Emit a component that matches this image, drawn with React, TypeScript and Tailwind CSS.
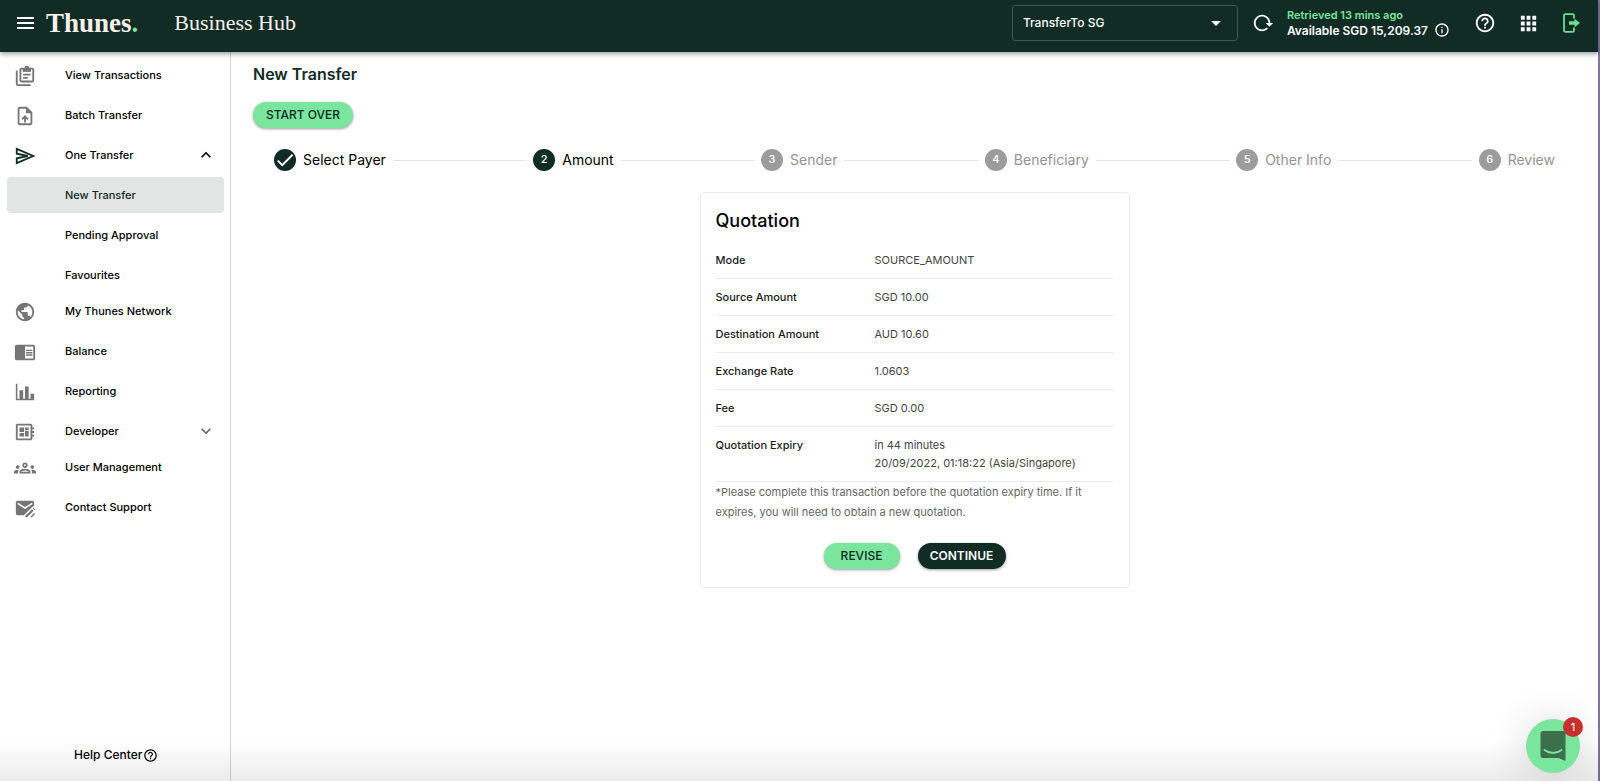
import clsx from "clsx";
import React, { useState } from "react";
import type { ReactNode } from "react";
import {
  MdApps,
  MdArrowDropDown,
  MdCheck,
  MdChromeReaderMode,
  MdExpandLess,
  MdExpandMore,
  MdHelpOutline,
  MdInfoOutline,
  MdOutlineDeveloperBoard,
  MdOutlineGroups,
  MdOutlineUploadFile,
  MdPublic
} from "react-icons/md";

type NavItem = {
  label: string;
  icon: ReactNode;
  children?: string[];
};

function MenuIcon() {
  return (
    <svg width="17" height="12" viewBox="0 0 17 12" fill="none" stroke="currentColor" strokeWidth="2">
      <path d="M0 1h17M0 6h17M0 11h17" />
    </svg>
  );
}

function ClipboardsIcon() {
  return (
    <svg width="22" height="22" viewBox="0 0 24 24" fill="none" stroke="currentColor" strokeWidth="2">
      <path d="M3 6v14.500a1.500 1.500 0 0 0 1.500 1.500H18" />
      <rect x="7" y="4" width="14" height="14" rx="1" />
      <path d="M10.500 4.500h7v2h-7z" fill="currentColor" />
      <circle cx="14" cy="3.200" r="1.500" />
      <path d="M10 10.500h8M10 14h5" />
    </svg>
  );
}

function SendIcon() {
  return (
    <svg width="22" height="22" viewBox="0 0 24 24" fill="none" stroke="currentColor" strokeWidth="2">
      <path d="M3 4.200 21 12 3 19.800v-5.300L15 12 3 9.500z" />
    </svg>
  );
}

function ChartIcon() {
  return (
    <svg width="22" height="22" viewBox="0 0 24 24" fill="currentColor">
      <path d="M22 21H2V3h1.700v16.300H6V10h4v9.300h2V6h4v13.300h2V14h4z" />
    </svg>
  );
}

function MailEditIcon() {
  return (
    <svg width="22" height="22" viewBox="0 0 24 24" fill="currentColor">
      <path d="M4 4h16a2 2 0 0 1 2 2v4.200c-.9-.1-1.800.2-2.500.9L11 19.600V20H4a2 2 0 0 1-2-2V6c0-1.100.9-2 2-2zm0 2v2l8 5 8-5V6l-8 5z" />
      <path d="M12.500 20.500l7.200-7.200 1.700 1.700-7.200 7.200h-1.700zM20.400 12.600l.8-.8 1.700 1.700-.8.8z" />
      <path d="M17.500 22l5-5v2l-3 3z" />
    </svg>
  );
}

function ReloadIcon() {
  return (
    <svg width="22" height="22" viewBox="0 0 24 24" fill="currentColor">
      <path d="M2 12c0 4.970 4.030 9 9 9 2.390 0 4.680-.94 6.400-2.600l-1.500-1.500A6.700 6.700 0 0 1 11 19C4.760 19 1.640 11.460 6.050 7.050 10.460 2.640 18 5.770 18 12h-3l4 4h.1l3.900-4h-3c0-4.970-4.030-9-9-9s-9 4.030-9 9z" />
    </svg>
  );
}

function LogoutIcon() {
  return (
    <svg width="18" height="20" viewBox="0 0 18 20">
      <path
        d="M12 5.500V2.500a1.300 1.300 0 0 0-1.300-1.300H3.300A1.300 1.300 0 0 0 2 2.500v15a1.300 1.300 0 0 0 1.300 1.300h7.400a1.300 1.300 0 0 0 1.300-1.300v-3"
        fill="none"
        stroke="currentColor"
        strokeWidth="1.800"
      />
      <path d="M7 8.300h5.500V5.700L18 10l-5.500 4.300v-2.600H7z" fill="currentColor" />
    </svg>
  );
}

const navItems: NavItem[] = [
  { label: "View Transactions", icon: <ClipboardsIcon /> },
  { label: "Batch Transfer", icon: <MdOutlineUploadFile size={22} /> },
  {
    label: "One Transfer",
    icon: <SendIcon />,
    children: ["New Transfer", "Pending Approval", "Favourites"]
  },
  { label: "My Thunes Network", icon: <MdPublic size={22} /> },
  { label: "Balance", icon: <MdChromeReaderMode size={22} /> },
  { label: "Reporting", icon: <ChartIcon /> },
  { label: "Developer", icon: <MdOutlineDeveloperBoard size={22} />, children: [] },
  { label: "User Management", icon: <MdOutlineGroups size={22} /> },
  { label: "Contact Support", icon: <MailEditIcon /> }
];

const steps = ["Select Payer", "Amount", "Sender", "Beneficiary", "Other Info", "Review"];

const quotation: [string, string[]][] = [
  ["Mode", ["SOURCE_AMOUNT"]],
  ["Source Amount", ["SGD 10.00"]],
  ["Destination Amount", ["AUD 10.60"]],
  ["Exchange Rate", ["1.0603"]],
  ["Fee", ["SGD 0.00"]],
  ["Quotation Expiry", ["in 44 minutes", "20/09/2022, 01:18:22 (Asia/Singapore)"]]
];

function Header() {
  return (
    <header className="relative z-10 flex h-[52px] shrink-0 items-center bg-[#112b25] pr-[18px] pb-[6px] pl-[17px] text-white shadow-[0_2px_5px_rgba(0,0,0,0.4)]">
      <button aria-label="Menu" className="mr-3">
        <MenuIcon />
      </button>
      <a href="#" className="font-['Liberation_Serif',serif] text-[27px] leading-8 font-bold text-[#f8f1ec]">
        Thunes<span className="text-[#7ae59c]">.</span>
      </a>
      <span className="ml-9 font-['Liberation_Serif',serif] text-[22px] leading-8 text-[#f8f1ec]">
        Business Hub
      </span>

      <div className="relative ml-auto w-[226px]">
        <select
          aria-label="Account"
          className="h-9 w-full appearance-none rounded-[3px] border border-[#41564f] bg-transparent px-[10px] text-xs font-medium">
          <option>TransferTo SG</option>
        </select>
        <MdArrowDropDown size={24} className="pointer-events-none absolute top-[6px] right-[10px]" />
      </div>
      <button aria-label="Refresh balance" className="ml-[14px]">
        <ReloadIcon />
      </button>
      <div className="ml-[13px] font-semibold whitespace-nowrap">
        <p className="text-[11px] leading-[14px] text-[#7ae59c]">Retrieved 13 mins ago</p>
        <p className="flex items-center gap-[6px] text-xs leading-[15px]">
          Available SGD 15,209.37
          <MdInfoOutline size={16} />
        </p>
      </div>
      <button aria-label="Help" className="ml-6">
        <MdHelpOutline size={22} />
      </button>
      <button aria-label="Apps" className="ml-[21px]">
        <MdApps size={23} />
      </button>
      <button aria-label="Log out" className="ml-[22px] text-[#6be093]">
        <LogoutIcon />
      </button>
    </header>
  );
}

function Sidebar() {
  const [open, setOpen] = useState("One Transfer");

  return (
    <nav className="flex w-[231px] shrink-0 flex-col border-r border-[#d4d4d4] pt-[5px] pr-[6px] pl-[7px] text-[11px] font-medium text-black">
      <ul>
        {navItems.map((item) => (
          <li key={item.label} className={item.children ? "" : "mb-1"}>
            <button
              onClick={() => item.children && setOpen(open === item.label ? "" : item.label)}
              className="flex h-9 w-full items-center pl-[7px] text-left">
              <span
                className={clsx(
                  "w-[51px] pt-[2px]",
                  open === item.label ? "text-[#112b25]" : "text-[#757575]"
                )}>
                {item.icon}
              </span>
              {item.label}
              {item.children &&
                (open === item.label ? (
                  <MdExpandLess size={20} className="mr-2 ml-auto" />
                ) : (
                  <MdExpandMore size={20} className="mr-2 ml-auto text-[#666]" />
                ))}
            </button>
            {open === item.label && item.children && (
              <ul className="flex flex-col gap-1 pt-1">
                {item.children.map((child) => (
                  <li key={child}>
                    <a
                      href="#"
                      className={clsx(
                        "flex h-9 items-center rounded pl-[58px]",
                        child === "New Transfer" && "bg-[#e2e5e4] text-[#112b25]"
                      )}>
                      {child}
                    </a>
                  </li>
                ))}
              </ul>
            )}
          </li>
        ))}
      </ul>
      <a href="#" className="mt-auto mb-[18px] ml-[67px] flex items-center gap-px text-xs">
        Help Center
        <MdHelpOutline size={15} />
      </a>
    </nav>
  );
}

function Stepper({ current }: { current: number }) {
  return (
    <ol className="mt-[21px] flex items-center px-[21px] text-sm">
      {steps.map((step, i) => (
        <li key={step} className={clsx("flex items-center", i > 0 && "flex-auto")}>
          {i > 0 && <span className="mx-[7px] h-px flex-1 bg-[#e4e4e4]" />}
          <span
            className={clsx(
              "mr-[7px] flex size-[22px] items-center justify-center rounded-full text-[11px] font-medium text-white",
              i <= current ? "bg-[#112b25]" : "bg-[#9c9c9c]"
            )}>
            {i < current ? <MdCheck size={22} /> : i + 1}
          </span>
          <span className={i <= current ? "text-black" : "text-[#949494]"}>{step}</span>
        </li>
      ))}
    </ol>
  );
}

function PillButton({
  dark,
  className,
  children
}: {
  dark?: boolean;
  className?: string;
  children: ReactNode;
}) {
  return (
    <button
      className={clsx(
        "h-[26px] rounded-full text-xs shadow-[0_1px_3px_rgba(0,0,0,0.4)]",
        dark ? "bg-[#112b25] font-semibold text-white" : "bg-[#7ae59c] font-medium text-[#112b25]",
        className
      )}>
      {children}
    </button>
  );
}

function QuotationCard() {
  return (
    <section className="mx-auto mt-[21px] w-full max-w-[430px] rounded border border-[#ebebeb] px-[15px] pt-[14px] pb-[18px]">
      <h2 className="text-lg leading-7 font-medium text-black">Quotation</h2>
      <table className="mt-[7px] w-full text-left text-[11px] leading-[18px]">
        <tbody>
          {quotation.map(([label, lines]) => (
            <tr key={label} className="border-b border-[#ebebeb]">
              <th scope="row" className="w-[159px] py-[9px] align-top font-medium text-[#1a1a1a]">
                {label}
              </th>
              <td className="py-[9px] text-[#444]">
                {lines.map((line) => (
                  <p key={line}>{line}</p>
                ))}
              </td>
            </tr>
          ))}
        </tbody>
      </table>
      <p className="text-[11px] leading-5 text-[#666]">
        *Please complete this transaction before the quotation expiry time. If it expires, you will
        need to obtain a new quotation.
      </p>
      <div className="mt-[21px] flex justify-center gap-[18px]">
        <PillButton className="w-[76px]">REVISE</PillButton>
        <PillButton dark className="w-[88px]">
          CONTINUE
        </PillButton>
      </div>
    </section>
  );
}

function ChatLauncher() {
  return (
    <button
      aria-label="Open chat"
      className="fixed right-5 bottom-2 z-20 flex size-[54px] items-center justify-center rounded-full bg-[#7ae59c] shadow-[0_2px_40px_rgba(0,0,0,0.16)]">
      <svg width="26" height="30" viewBox="0 0 26 30">
        <path
          d="M3 0h20a2.500 2.500 0 0 1 2.500 2.500V30l-7-3H3a2.500 2.500 0 0 1-2.500-2.500v-22A2.500 2.500 0 0 1 3 0z"
          fill="#3c704d"
        />
        <path
          d="M4.500 19c5 4 12 4 17 0"
          fill="none"
          stroke="#7ae59c"
          strokeWidth="1.800"
          strokeLinecap="round"
        />
      </svg>
      <span className="absolute -top-[2px] -right-[3px] flex size-5 items-center justify-center rounded-full bg-[#c5312f] text-[11px] text-white">
        1
      </span>
    </button>
  );
}

export default function App() {
  return (
    <div className="flex min-h-screen flex-col border-r-2 border-[#7f75a0] bg-white font-['Inter',sans-serif]">
      <Header />
      <div className="flex flex-1">
        <Sidebar />
        <main className="min-w-0 flex-1 px-[22px] pt-[10px]">
          <h1 className="text-base leading-6 font-semibold text-[#112b25]">New Transfer</h1>
          <PillButton className="mt-4 w-[100px]">START OVER</PillButton>
          <Stepper current={1} />
          <QuotationCard />
        </main>
      </div>
      <div className="pointer-events-none fixed inset-x-0 bottom-0 h-10 bg-linear-to-b from-transparent to-black/8" />
      <ChatLauncher />
    </div>
  );
}
